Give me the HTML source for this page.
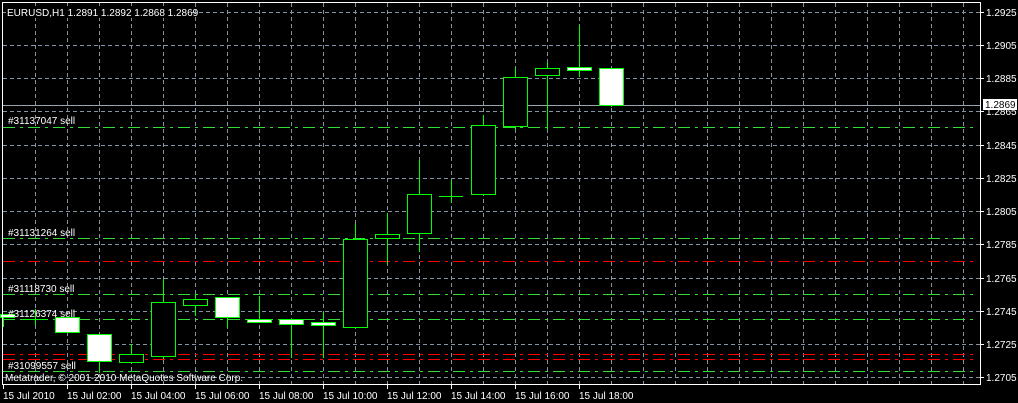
<!DOCTYPE html>
<html><head><meta charset="utf-8"><style>
html,body{margin:0;padding:0;background:#000;width:1018px;height:403px;overflow:hidden}
svg{display:block}
text{font-family:"Liberation Sans",sans-serif;font-size:10px;fill:#fff}
</style></head><body>
<svg width="1018" height="403" viewBox="0 0 1018 403" xmlns="http://www.w3.org/2000/svg">
<rect width="1018" height="403" fill="#000"/>
<g stroke="#8394a6" stroke-width="1" stroke-dasharray="4,3">
<path d="M3 12.5H980M3 45.5H980M3 78.5H980M3 111.5H980M3 145.5H980M3 178.5H980M3 211.5H980M3 244.5H980M3 278.5H980M3 311.5H980M3 344.5H980M3 377.5H980"/>
<path d="M35.5 3V384M67.5 3V384M99.5 3V384M131.5 3V384M163.5 3V384M195.5 3V384M227.5 3V384M259.5 3V384M291.5 3V384M323.5 3V384M355.5 3V384M387.5 3V384M419.5 3V384M451.5 3V384M483.5 3V384M515.5 3V384M547.5 3V384M579.5 3V384M611.5 3V384M643.5 3V384M675.5 3V384M707.5 3V384M739.5 3V384M771.5 3V384M803.5 3V384M835.5 3V384M867.5 3V384M899.5 3V384M931.5 3V384M963.5 3V384"/>
</g>
<g stroke-width="1" stroke-dasharray="12,5,3,5">
<path stroke="#33dd33" d="M3 127.5H975M3 238.5H975M3 294.5H975M3 319.5H975M3 371.5H975"/>
<path stroke="#ff0000" d="M3 261.5H975M3 354.5H975M3 359.5H975"/>
</g>
<path d="M3 105.5H980" stroke="#9aa4ae" stroke-width="1"/>
<g stroke="#00ff00" stroke-width="1">
<path d="M3.5 314V327M35.5 309V325M67.5 317V333M99.5 334V373M131.5 344V362M163.5 279V359M195.5 294V316M227.5 297V328M259.5 296V322M291.5 319V358M323.5 312V358M355.5 224V327M387.5 213V264M419.5 160V252M451.5 180V203M483.5 115V194M515.5 68V130M547.5 62V130M579.5 25V77M611.5 68V107"/>
<path d="M23 319.5H47M439 196.5H463"/>
<rect x="0.5" y="314.5" width="14" height="3" fill="#fff"/>
<rect x="55.5" y="317.5" width="24" height="15" fill="#fff"/>
<rect x="87.5" y="334.5" width="24" height="27" fill="#fff"/>
<rect x="119.5" y="354.5" width="24" height="8" fill="#000"/>
<rect x="151.5" y="302.5" width="24" height="54" fill="#000"/>
<rect x="183.5" y="299.5" width="24" height="6" fill="#000"/>
<rect x="215.5" y="297.5" width="24" height="20" fill="#fff"/>
<rect x="247.5" y="319.5" width="24" height="3" fill="#fff"/>
<rect x="279.5" y="319.5" width="24" height="5" fill="#fff"/>
<rect x="311.5" y="322.5" width="24" height="3" fill="#fff"/>
<rect x="343.5" y="239.5" width="24" height="88" fill="#000"/>
<rect x="375.5" y="234.5" width="24" height="4" fill="#000"/>
<rect x="407.5" y="194.5" width="24" height="39" fill="#000"/>
<rect x="471.5" y="125.5" width="24" height="69" fill="#000"/>
<rect x="503.5" y="77.5" width="24" height="49" fill="#000"/>
<rect x="535.5" y="68.5" width="24" height="7" fill="#000"/>
<rect x="567.5" y="67.5" width="24" height="3" fill="#fff"/>
<rect x="599.5" y="68.5" width="24" height="37" fill="#fff"/>
</g>
<g stroke="#fff" stroke-width="1" fill="none">
<path d="M2.5 2.5H980.5V384.5H2.5Z"/>
<path d="M980 12.5H984M980 45.5H984M980 78.5H984M980 111.5H984M980 145.5H984M980 178.5H984M980 211.5H984M980 244.5H984M980 278.5H984M980 311.5H984M980 344.5H984M980 377.5H984"/>
<path d="M3.5 384V389M67.5 384V389M131.5 384V389M195.5 384V389M259.5 384V389M323.5 384V389M387.5 384V389M451.5 384V389M515.5 384V389M579.5 384V389"/>
</g>
<rect x="6" y="6" width="183" height="12" fill="#000"/>
<text x="7" y="16">EURUSD,H1  1.2891 1.2892 1.2868 1.2869</text>
<text x="8" y="124">#31137047 sell</text>
<text x="8" y="236">#31131264 sell</text>
<text x="8" y="292">#31118730 sell</text>
<text x="8" y="317">#31126374 sell</text>
<text x="8" y="369">#31099557 sell</text>
<text x="5" y="381">Metatrader, © 2001-2010 MetaQuotes Software Corp.</text>
<g>
<text x="986" y="16">1.2925</text>
<text x="986" y="49">1.2905</text>
<text x="986" y="82">1.2885</text>
<text x="986" y="115">1.2865</text>
<text x="986" y="149">1.2845</text>
<text x="986" y="182">1.2825</text>
<text x="986" y="215">1.2805</text>
<text x="986" y="248">1.2785</text>
<text x="986" y="282">1.2765</text>
<text x="986" y="315">1.2745</text>
<text x="986" y="348">1.2725</text>
<text x="986" y="381">1.2705</text>
</g>
<rect x="983" y="99" width="34" height="11" fill="#fff"/>
<text x="985" y="108" style="fill:#000">1.2869</text>
<g>
<text x="3" y="399">15 Jul 2010</text>
<text x="67" y="399">15 Jul 02:00</text>
<text x="131" y="399">15 Jul 04:00</text>
<text x="195" y="399">15 Jul 06:00</text>
<text x="259" y="399">15 Jul 08:00</text>
<text x="323" y="399">15 Jul 10:00</text>
<text x="387" y="399">15 Jul 12:00</text>
<text x="451" y="399">15 Jul 14:00</text>
<text x="515" y="399">15 Jul 16:00</text>
<text x="579" y="399">15 Jul 18:00</text>
</g>
</svg>
</body></html>
